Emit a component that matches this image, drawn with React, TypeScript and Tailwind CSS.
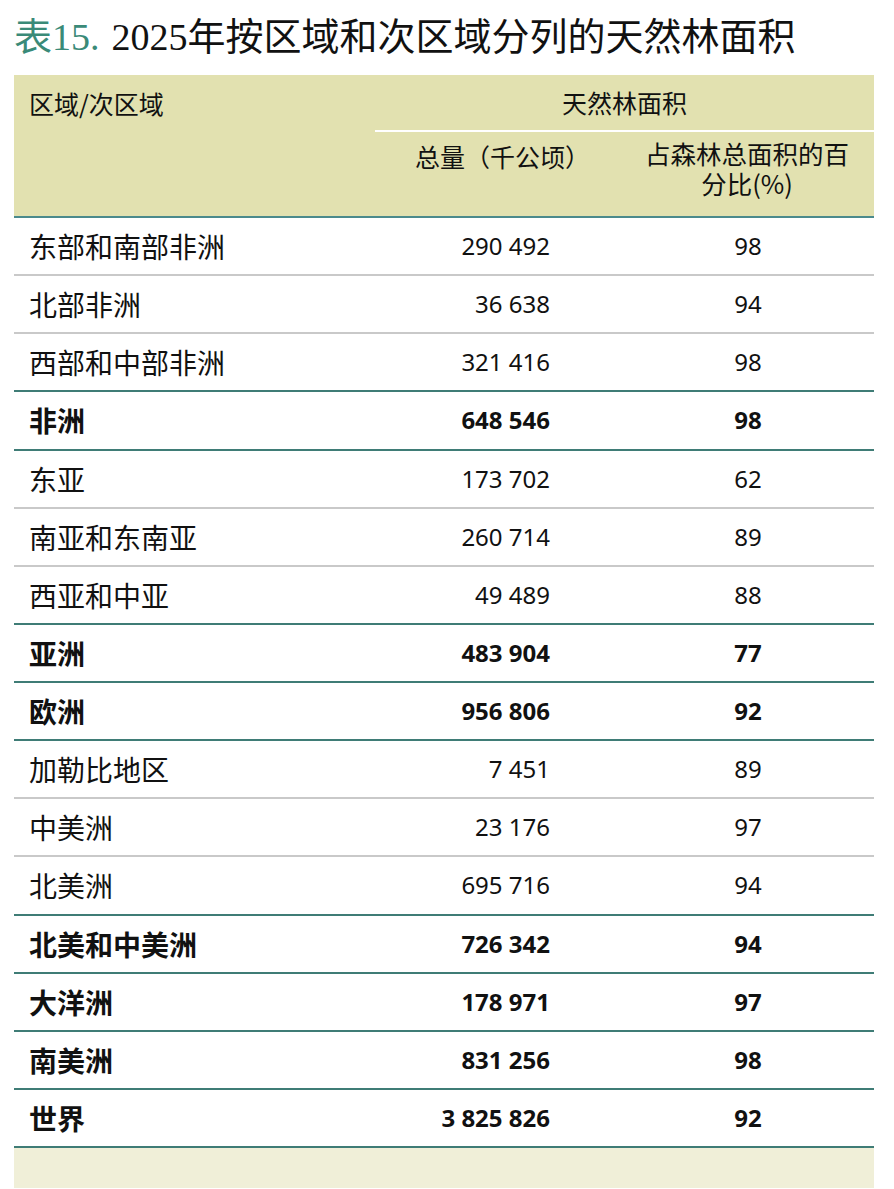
const rows: { name: string; total: string; pct: string; bold?: boolean }[] = [
  { name: '东部和南部非洲', total: '290 492', pct: '98' },
  { name: '北部非洲', total: '36 638', pct: '94' },
  { name: '西部和中部非洲', total: '321 416', pct: '98' },
  { name: '非洲', total: '648 546', pct: '98', bold: true },
  { name: '东亚', total: '173 702', pct: '62' },
  { name: '南亚和东南亚', total: '260 714', pct: '89' },
  { name: '西亚和中亚', total: '49 489', pct: '88' },
  { name: '亚洲', total: '483 904', pct: '77', bold: true },
  { name: '欧洲', total: '956 806', pct: '92', bold: true },
  { name: '加勒比地区', total: '7 451', pct: '89' },
  { name: '中美洲', total: '23 176', pct: '97' },
  { name: '北美洲', total: '695 716', pct: '94' },
  { name: '北美和中美洲', total: '726 342', pct: '94', bold: true },
  { name: '大洋洲', total: '178 971', pct: '97', bold: true },
  { name: '南美洲', total: '831 256', pct: '98', bold: true },
  { name: '世界', total: '3 825 826', pct: '92', bold: true },
];

const cjk = "font-['Noto_Sans_CJK_SC',sans-serif]";
const num = "font-['Noto_Sans','Noto_Sans_CJK_SC',sans-serif]";

export default function App() {
  return (
    <div className="w-[894px] bg-white px-[14px] pb-0 text-[#111]">
      <h1 className="flex h-[75px] items-center pb-[4px] text-[38px] leading-none">
        <span className="font-['Liberation_Serif','Noto_Sans_CJK_SC',serif] text-[#3a8a78]">
          <span className={cjk}>表</span>15.
        </span>
        <span className="ml-[12px] font-['Liberation_Serif','Noto_Sans_CJK_SC',serif]">
          2025<span className={cjk}>年按区域和次区域分列的天然林面积</span>
        </span>
      </h1>

      <table className="w-[860px] table-fixed border-collapse">
        <colgroup>
          <col className="w-[361px]" />
          <col className="w-[245px]" />
          <col className="w-[254px]" />
        </colgroup>
        <thead className={`bg-[#e2e1b0] ${cjk} text-[25px]`}>
          <tr className="h-[56px]">
            <th rowSpan={2} className="pl-[15px] pt-[10px] text-left align-top font-normal">
              区域/次区域
            </th>
            <th colSpan={2} className="border-b-2 border-white pt-[1px] font-normal">
              天然林面积
            </th>
          </tr>
          <tr className="h-[86px] border-b-2 border-[#4b8a8c]">
            <th className="pl-[10px] pt-[6px] align-top font-normal">总量（千公顷）</th>
            <th className="px-[20px] pt-[6px] align-top text-[25.5px] font-normal leading-[30px]">
              占森林总面积的百分比(%)
            </th>
          </tr>
        </thead>
        <tbody className="text-[24px]">
          {rows.map((r, i) => {
            const next = rows[i + 1];
            const teal = r.bold || (next && next.bold) || !next;
            return (
              <tr
                key={r.name}
                className={`h-[58.13px] border-b-2 ${teal ? 'border-[#3f7c76]' : 'border-[#c9c9c9]'} ${
                  r.bold ? 'font-bold' : 'font-normal'
                }`}
              >
                <td className={`pl-[15px] text-[28px] ${cjk}`}>{r.name}</td>
                <td className={`pr-[70px] text-right ${num}`}>{r.total}</td>
                <td className={`pl-[2px] text-center ${num}`}>{r.pct}</td>
              </tr>
            );
          })}
        </tbody>
      </table>
      <div className="h-[40px] w-[860px] bg-[#f0efd8]" />
    </div>
  );
}
